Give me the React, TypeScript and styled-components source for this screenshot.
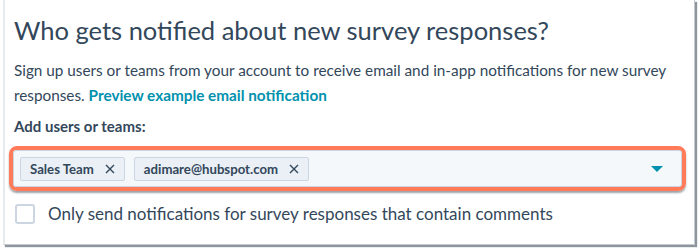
import styled, { createGlobalStyle } from "styled-components";

const GlobalStyle = createGlobalStyle`
  html, body {
    margin: 0;
    padding: 0;
    background: #ffffff;
  }
  body {
    font-family: Lato, "Open Sans", sans-serif;
    color: #33475b;
  }
`;

const Page = styled.div`
  width: 700px;
  height: 250px;
  overflow: hidden;
  background: #ffffff;
`;

const Panel = styled.section`
  box-sizing: border-box;
  width: 692px;
  height: 245px;
  margin-left: 3px;
  padding: 14px 0 0 9px;
  background: #ffffff;
  border-left: 2px solid #e7eaed;
  border-right: 1px solid #c3c9cf;
  border-bottom: 1px solid #c3c9cf;
  box-shadow: 2px 2px 1px #8e959d;
`;

const Title = styled.h2`
  margin: 0;
  font-size: 25.5px;
  font-weight: 400;
  line-height: 32px;
  color: #33475b;
`;

const Description = styled.p`
  margin: 12px 0 0;
  font-size: 15.3px;
  line-height: 25px;
  color: #33475b;
`;

const Link = styled.a`
  color: #0091ae;
  font-weight: 700;
  text-decoration: none;
`;

const FieldLabel = styled.div`
  margin-top: 7px;
  font-size: 15px;
  font-weight: 700;
  line-height: 22px;
  color: #33475b;
`;

const FieldRing = styled.div`
  box-sizing: border-box;
  width: 677px;
  margin: 9px 0 0 -5px;
  border: 4px solid #ff7a59;
  border-radius: 8px;
  box-shadow: 0 2px 2px rgba(40, 50, 60, 0.45);
`;

const InputBox = styled.div`
  display: flex;
  align-items: center;
  gap: 9px;
  height: 35px;
  padding: 0 18px 0 6px;
  background: #f5f8fa;
  border: 1px solid #cbd6e2;
  border-radius: 3px;
`;

const Tag = styled.span`
  display: inline-flex;
  align-items: center;
  gap: 11px;
  box-sizing: border-box;
  height: 24px;
  padding: 0 9px 0 9px;
  background: #eaf0f6;
  border: 1px solid #cbd6e2;
  border-radius: 2px;
  font-size: 13.2px;
  font-weight: 700;
  color: #33475b;
`;

const Close = styled.svg`
  width: 10px;
  height: 10px;
`;

const Caret = styled.span`
  margin-left: auto;
  width: 0;
  height: 0;
  border-left: 6px solid transparent;
  border-right: 6px solid transparent;
  border-top: 6px solid #0091ae;
`;

const CheckRow = styled.label`
  display: flex;
  align-items: center;
  gap: 13px;
  margin-top: 12px;
  margin-left: 1px;
  font-size: 17px;
  color: #33475b;
`;

const Box = styled.span`
  box-sizing: border-box;
  width: 20px;
  height: 20px;
  background: #ffffff;
  border: 2px solid #cbd6e2;
  border-radius: 3px;
`;

const CloseIcon = () => (
  <Close viewBox="0 0 10 10">
    <path d="M1 1 L9 9 M9 1 L1 9" stroke="#33475b" strokeWidth="1.4" fill="none" />
  </Close>
);

export default function App() {
  return (
    <Page>
      <GlobalStyle />
      <Panel>
        <Title>Who gets notified about new survey responses?</Title>
        <Description>
          Sign up users or teams from your account to receive email and in-app
          notifications for new survey responses.{" "}
          <Link href="#">Preview example email notification</Link>
        </Description>
        <FieldLabel>Add users or teams:</FieldLabel>
        <FieldRing>
          <InputBox>
            <Tag>
              Sales Team <CloseIcon />
            </Tag>
            <Tag>
              adimare@hubspot.com <CloseIcon />
            </Tag>
            <Caret />
          </InputBox>
        </FieldRing>
        <CheckRow>
          <Box />
          Only send notifications for survey responses that contain comments
        </CheckRow>
      </Panel>
    </Page>
  );
}
